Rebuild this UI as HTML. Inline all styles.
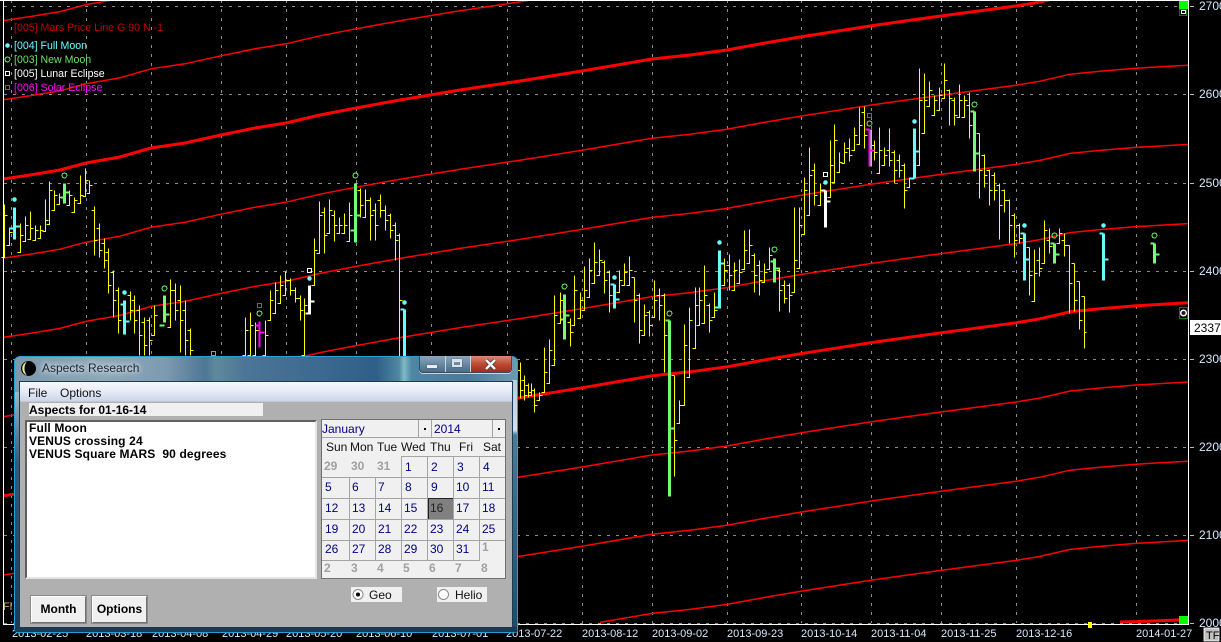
<!DOCTYPE html>
<html><head><meta charset="utf-8"><title>Aspects Research</title>
<style>
html,body{margin:0;padding:0;background:#000;width:1221px;height:642px;overflow:hidden;font-family:"Liberation Sans",sans-serif}
#p{position:relative;width:1221px;height:642px;overflow:hidden}
svg{position:absolute;left:0;top:0}
.a{position:absolute;white-space:pre}
.ax{font:12px "Liberation Sans",sans-serif;fill:#d4e8ff}
.dt{font:11px "Liberation Sans",sans-serif;fill:#d4e8ff}
.lg{font:10.6px "Liberation Sans",sans-serif}
.d{font:12px "Liberation Sans",sans-serif;fill:#000080}
.g{font:bold 12px "Liberation Sans",sans-serif;fill:#a0a0a0}
.w{font:12px "Liberation Sans",sans-serif;fill:#111}
.btn{position:absolute;background:#f0f0f0;border:1px solid;border-color:#fff #707070 #707070 #fff;box-shadow:0 0 0 1px #8a8a8a;font:bold 12px/25px "Liberation Sans",sans-serif;text-align:center;color:#000;top:596px;height:25px}
</style></head><body><div id="p">
<svg width="1221" height="642" viewBox="0 0 1221 642">
<defs>
<clipPath id="c"><rect x="4" y="1" width="1184" height="622"/></clipPath>
<path id="l" fill="none" stroke="#f00" d="M3 179L30 175L60 170L86 163L120 157L151 148L185 143L221 135L255 128L286 123L320 115L356 108L400 100L460 90L520 81L582 71L652 59L690 55L727 50L765 43L800 37L870 26L905 21L941 16L1016 6L1040 2L1070 -5L1100 -8L1136 -11L1188 -14"/>
</defs>
<g stroke="#8c8c8c" stroke-width="1" stroke-dasharray="3 6" shape-rendering="crispEdges">
<path d="M4 6.5H1188M4 94.5H1188M4 183.5H1188M4 271.5H1188M4 359.5H1188M4 447.5H1188M4 535.5H1188"/>
<path d="M11.500 0V623M86.500 0V623M151.500 0V623M221.500 0V623M286.500 0V623M356.500 0V623M431.500 0V623M507.500 0V623M582.500 0V623M652.500 0V623M727.500 0V623M801.500 0V623M871.500 0V623M941.500 0V623M1016.500 0V623M1136.500 0V623"/>
</g>
<g clip-path="url(#c)">
<use href="#l" y="-158.4" stroke-width="1.5"/><use href="#l" y="-79.2" stroke-width="1.5"/>
<use href="#l" y="0" stroke-width="3"/><use href="#l" y="79.2" stroke-width="1.5"/>
<use href="#l" y="158.4" stroke-width="1.5"/><use href="#l" y="237.6" stroke-width="1.5"/>
<use href="#l" y="316.8" stroke-width="3"/><use href="#l" y="396" stroke-width="1.5"/>
<path fill="none" stroke="#f00" stroke-width="1.5" d="M151 623L185 618.200L221 610.200L255 603.200L286 598.200L320 590.200L356 583.200L400 575.200L460 565.200L520 556.200L582 546.200L652 534.200L690 530.200L727 525.200L765 518.200L800 512.200L870 501.200L905 496.200L941 491.200L1016 481.200L1040 477.200L1070 470.200L1100 467.200L1136 464.200L1188 461.200"/>
<path fill="none" stroke="#f00" stroke-width="1.5" d="M600 622.400L652 613.400L690 609.400L727 604.400L765 597.400L800 591.400L870 580.400L905 575.400L941 570.400L1016 560.400L1040 556.400L1070 549.400L1100 546.400L1136 543.400L1188 540.400"/>
<path fill="none" stroke="#f00" stroke-width="3" d="M1120 622L1136 621.600L1188 619.600"/>
</g>
<g transform="translate(.5 .5)" shape-rendering="crispEdges" fill="none">
<path stroke="#ff0" d="M4 204V257h-3M4 215h3M9 227V245h-3M9 232h3M20 223V252h-3M20 235h3M25 216V241h-3M25 225h3M30 211V239h-3M30 228h3M35 225V240h-3M35 230h3M40 225V238h-3M40 230h3M45 199V231h-3M45 220h3M49 181V224h-3M49 190h3M54 190V210h-3M54 195h3M59 193V204h-3M59 197h3M69 190V205h-3M69 195h3M74 197V212h-3M74 200h3M80 175V203h-3M80 195h3M85 168V196h-3M85 180h3M89 180V193h-3M89 185h3M94 206V255M94 210h-3M94 240h3M99 223V257M99 228h-3M99 250h3M104 238V268M104 243h-3M104 260h3M108 248V293M108 252h-3M108 285h3M113 270V317M113 272h-3M113 300h3M118 287V333M118 290h-3M118 320h3M130 291V320M130 295h-3M130 310h3M134 295V333M134 300h-3M134 320h3M139 305V355M139 310h-3M139 335h3M144 317V355M144 322h-3M144 345h3M149 317V355M149 320h-3M149 340h3M154 305V335h-3M154 315h3M170 279V327h-3M170 290h3M175 283V320M175 290h-3M175 310h3M180 285V352M180 300h-3M180 320h3M185 300V355M185 310h-3M185 340h3M190 328V355M190 330h-3M190 350h3M245 317V355h-3M245 330h3M250 312V355h-3M250 325h3M255 322V355h-3M255 330h3M265 320V355h-3M265 335h3M270 290V320h-3M270 300h3M275 282V313h-3M275 290h3M280 275V303h-3M280 285h3M285 271V295h-3M285 280h3M290 278V295M290 280h-3M290 290h3M295 287V302M295 290h-3M295 298h3M300 295V320M300 298h-3M300 310h3M304 298V355h-3M304 305h3M314 238V285h-3M314 250h3M319 201V253h-3M319 215h3M324 207V253M324 212h-3M324 235h3M329 199V233h-3M329 210h3M334 210V241M334 215h-3M334 225h3M339 217V233h-3M339 225h3M344 213V233h-3M344 225h3M349 202V241h-3M349 215h3M360 188V217M360 190h-3M360 205h3M365 189V217h-3M365 200h3M370 197V240M370 200h-3M370 215h3M375 203V240M375 210h-3M375 225h3M380 194V217M380 200h-3M380 210h3M385 205V230M385 210h-3M385 220h3M390 213V238M390 215h-3M390 230h3M395 222V260M395 225h-3M395 240h3M399 233V356M399 235h-3M399 300h3M520 362V398M520 370h-3M520 390h3M524 375V400M524 380h-3M524 395h3M528 383V397M528 385h-3M528 392h3M531 383V395h-3M534 388V412M534 390h-3M534 405h3M539 392V400h-3M539 395h3M544 347V392h-3M544 372h3M549 339V383h-3M549 350h3M554 295V365h-3M554 315h3M560 292V323h-3M560 300h3M570 318V346M570 322h-3M570 332h3M574 275V325h-3M574 290h3M580 292V318h-3M580 300h3M584 266V310h-3M584 290h3M589 258V297h-3M589 270h3M594 242V283h-3M594 262h3M599 249V275h-3M599 260h3M604 260V293M604 262h-3M604 280h3M609 270V312M609 272h-3M609 295h3M619 270V292h-3M619 280h3M624 263V285h-3M624 272h3M629 256V285h-3M629 270h3M634 277V322M634 277h-3M634 300h3M639 293V343M639 295h-3M639 330h3M644 304V335h-3M644 315h3M649 310V336M649 312h-3M649 325h3M654 280V317h-3M654 300h3M659 288V320M659 295h-3M659 305h3M664 293V372M664 295h-3M664 335h3M674 375V476M674 375h-3M674 440h3M679 400V423h-3M679 405h3M684 324V405h-3M684 345h3M689 307V377h-3M689 320h3M695 287V348h-3M695 305h3M699 287V325h-3M699 300h3M704 265V323h-3M704 295h3M709 303V332M709 305h-3M709 320h3M714 292V317h-3M714 310h3M724 258V285h-3M724 270h3M729 254V290M729 265h-3M729 275h3M734 262V290h-3M734 270h3M739 259V283h-3M739 272h3M744 230V269h-3M744 250h3M749 229V263h-3M749 245h3M754 253V292M754 255h-3M754 275h3M759 260V295M759 265h-3M759 280h3M764 263V282h-3M764 272h3M769 247V269h-3M769 255h3M779 267V311M779 270h-3M779 290h3M784 280V303M784 285h-3M784 298h3M789 283V312M789 285h-3M789 295h3M794 207V292h-3M794 260h3M799 207V268h-3M799 225h3M804 177V234h-3M804 190h3M809 147V215h-3M809 175h3M814 163V205M814 170h-3M814 195h3M820 183V205h-3M820 190h3M830 140V197h-3M830 165h3M834 124V182h-3M834 140h3M839 152V172h-3M839 162h3M844 142V163h-3M844 152h3M849 138V161M849 148h-3M849 155h3M854 127V150h-3M854 135h3M859 107V144h-3M859 125h3M864 106V148M864 112h-3M864 135h3M874 140V160M874 145h-3M874 152h3M879 127V173h-3M879 150h3M884 147V165h-3M884 155h3M889 128V166M889 150h-3M889 160h3M894 150V183M894 152h-3M894 170h3M899 154V177M899 160h-3M899 170h3M904 163V208M904 165h-3M904 190h3M909 177V187h-3M919 68V165h-3M919 100h3M924 73V133h-3M924 100h3M929 81V106h-3M929 90h3M934 95V115h-3M934 100h3M939 87V110h-3M939 95h3M944 63V98h-3M944 80h3M949 89V125M949 90h-3M949 98h3M954 97V125M954 100h-3M954 115h3M959 84V117h-3M959 100h3M964 95V117h-3M964 100h3M969 92V138M969 105h-3M969 125h3M979 133V198M979 133h-3M979 170h3M984 154V187M984 155h-3M984 175h3M989 169V205M989 170h-3M989 190h3M994 172V200M994 175h-3M994 190h3M999 183V239M999 185h-3M999 205h3M1004 189V212M1004 190h-3M1004 200h3M1009 199V243M1009 200h-3M1009 225h3M1014 213V257M1014 215h-3M1014 240h3M1019 223V243M1019 225h-3M1019 238h3M1029 247V295M1029 247h-3M1029 275h3M1034 249V301h-3M1034 273h3M1039 247V276M1039 260h-3M1039 268h3M1044 220V263h-3M1044 230h3M1049 228V253M1049 240h-3M1049 246h3M1059 228V243h-3M1059 233h3M1064 233V256M1064 240h-3M1064 245h3M1069 245V313M1069 245h-3M1069 283h3M1074 263V311M1074 263h-3M1074 300h3M1079 281V329M1079 281h-3M1079 320h3M1084 296V348M1084 296h-3M1084 332h2"/>
<g stroke-width="3">
<path stroke="#66ffff" d="M14 207V239M124 300V334M404 309V356M614 284V308M719 250V308M914 128V178M1024 233V280M1103 233V280"/>
<path stroke="#70ff70" d="M64 183V203M164 295V322M355 183V242M564 294V339M669 320V496M774 258V282M974 111V171M1054 243V263M1154 243V263M870 129V166"/>
<path stroke="#fff" d="M309 285V314M825 190V227"/>
</g>
<path stroke="#ff00ff" stroke-width="2" d="M259 321V347M869 129V166"/>
<g stroke-width="2">
<path stroke="#66ffff" d="M14 228H9M14 226H20M124 304H120M124 321H129M404 309H400M614 284H610M614 299H619M719 307H714M719 263H724M914 178H909M914 151H919M1024 233H1020M1024 259H1029M1103 233H1099M1103 259H1108"/>
<path stroke="#70ff70" d="M64 197H60M64 192H69M164 325H159M164 314H169M355 230H350M355 215H360M564 319H560M564 315H569M669 320H665M669 428H674M774 261H770M774 268H779M974 111H970M974 153H979M1054 243H1050M1054 254H1059M1154 243H1150M1154 254H1159"/>
<path stroke="#ff00ff" d="M259 325H255M259 332H264M869 129H865M869 150H874"/>
<path stroke="#fff" d="M309 313H305M309 301H314M825 190H821M825 201H830"/>
</g>
<path stroke="#66ffff" stroke-width="4.500" stroke-linecap="round" shape-rendering="auto" d="M14 199h0M124 292h0M404 302h0M614 277h0M719 242h0M914 121h0M1024 225h0M1103 225h0M309 278h0M825 182h0M7 45h0"/>
<g stroke="#70ff70"><circle cx="64" cy="175" r="2.400"/><circle cx="164" cy="288" r="2.400"/><circle cx="355" cy="175" r="2.400"/><circle cx="564" cy="286" r="2.400"/><circle cx="669" cy="313" r="2.400"/><circle cx="774" cy="249" r="2.400"/><circle cx="974" cy="104" r="2.400"/><circle cx="1054" cy="235" r="2.400"/><circle cx="1154" cy="235" r="2.400"/><circle cx="259" cy="313" r="2.400"/><circle cx="869" cy="123" r="2.400"/><circle cx="7" cy="59" r="2.400"/></g>
<path stroke="#fff" d="M307 268h4v4h-4zM823 172h4v4h-4zM5 71h4v4h-4z"/>
<path stroke="#999" d="M211 351h4v4h-4z"/>
<path stroke="#ff00ff" d="M257 303h4v4h-4zM867 113h4v4h-4zM5 85h4v4h-4z"/>
</g>
<g fill="#fff" shape-rendering="crispEdges">
<rect x="0" y="0" width="1189" height="1"/><rect x="3" y="0" width="1" height="625"/><rect x="1188" y="0" width="1" height="625"/><rect x="3" y="624" width="1186" height="1"/>
</g>
<path stroke="#8c8c8c" stroke-dasharray="3 6" d="M4 623.500H1188" shape-rendering="crispEdges"/>
<g shape-rendering="crispEdges">
<rect x="1179" y="1" width="9" height="8" fill="#0f0"/>
<rect x="1179.500" y="9.500" width="7" height="6" fill="#000" stroke="#0a7a0a"/>
<rect x="1181.500" y="10.500" width="4" height="3" fill="none" stroke="#fff"/>
<rect x="1179" y="616" width="9" height="8" fill="#0f0"/>
<rect x="1088" y="622" width="4" height="6" fill="#ff0"/>
<rect x="1179.500" y="307.500" width="8" height="11" fill="#000" stroke="#0a7a0a"/>
<rect x="1190" y="320" width="31" height="15" fill="#fff"/>
<path stroke="#bbb" d="M1190 6.500h4M1190 94.500h4M1190 183.500h4M1190 271.500h4M1190 359.500h4M1190 447.500h4M1190 535.500h4M1190 623.500h4"/>
</g>
<circle cx="1183.500" cy="313" r="2.800" fill="#222" stroke="#fff" stroke-width="1.500"/>
<rect x="1204" y="628" width="15" height="13" fill="#c0c0c0" stroke="#fff" stroke-width=".8"/>
<text x="1206" y="639" font-family="Liberation Sans" font-size="11" fill="#000">TF</text>
<text class="ax" x="1199" y="10">2700</text><text class="ax" x="1199" y="98">2600</text><text class="ax" x="1199" y="187">2500</text><text class="ax" x="1199" y="275">2400</text><text class="ax" x="1199" y="363">2300</text><text class="ax" x="1199" y="451">2200</text><text class="ax" x="1199" y="539">2100</text><text class="ax" x="1199" y="627">2000</text>
<text x="1194" y="332" font-family="Liberation Sans" font-size="12" fill="#000">2337</text>
<text class="dt" x="12" y="637">2013-02-25</text><text class="dt" x="86" y="637">2013-03-18</text><text class="dt" x="152" y="637">2013-04-08</text><text class="dt" x="222" y="637">2013-04-29</text><text class="dt" x="286" y="637">2013-05-20</text><text class="dt" x="356" y="637">2013-06-10</text><text class="dt" x="432" y="637">2013-07-01</text><text class="dt" x="506" y="637">2013-07-22</text><text class="dt" x="582" y="637">2013-08-12</text><text class="dt" x="652" y="637">2013-09-02</text><text class="dt" x="727" y="637">2013-09-23</text><text class="dt" x="801" y="637">2013-10-14</text><text class="dt" x="871" y="637">2013-11-04</text><text class="dt" x="941" y="637">2013-11-25</text><text class="dt" x="1016" y="637">2013-12-16</text><text class="dt" x="1136" y="637">2014-01-27</text>
<text class="lg" x="14" y="31" fill="#c00000">[005] Mars Price Line G 90 N -1</text>
<text class="lg" x="14" y="49" fill="#66ffff">[004] Full Moon</text>
<text class="lg" x="14" y="63" fill="#70e070">[003] New Moon</text>
<text class="lg" x="14" y="77" fill="#fff">[005] Lunar Eclipse</text>
<text class="lg" x="14" y="91" fill="#ff00ff">[006] Solar Eclipse</text>
<text x="3" y="610" font-family="Liberation Sans" font-size="11" fill="#c8a860">Fl</text>
</svg>

<!-- dialog frame -->
<div class="a" style="left:14px;top:356px;width:504px;height:277px;border-radius:6px 6px 4px 4px;box-sizing:border-box;border:1px solid #2a9fd6;background:linear-gradient(90deg,#7f99ac 0,#8fa8b8 18%,#7d9ab0 30%,#4e7696 38%,#5f8a9c 40%,#4c7596 46%,#3c6a90 60%,#2f5f88 72%,#4f88a0 76.500%,#7dbcc4 77.500%,#4f86a4 79%,#4a7a9c 90%,#6f9ab0 100%)"></div>
<div class="a" style="left:15px;top:392px;width:5px;height:236px;background:linear-gradient(180deg,#9fb8c4,#34597a 30%,#1c3a56)"></div>
<div class="a" style="left:512px;top:380px;width:5px;height:250px;background:linear-gradient(180deg,#b8d0d8 0,#d0e2e8 20%,#4a7a9c 22%,#1f4a70)"></div>
<div class="a" style="left:15px;top:627px;width:502px;height:5px;background:#1c3a56"></div>
<svg width="1221" height="642" viewBox="0 0 1221 642">
<circle cx="28.500" cy="368.500" r="7.500" fill="#000"/>
<path d="M27 361.500A7.500 7.500 0 0 0 27 375.500A11 11 0 0 1 27 361.500Z" fill="#f2e98a"/>
</svg>
<div class="a" style="left:42px;top:361px;font-size:12px;line-height:15px;color:#1c2630;text-shadow:0 0 6px #dfe8ee,0 0 6px #dfe8ee">Aspects Research</div>
<!-- caption buttons -->
<div class="a" style="left:419px;top:356px;width:93px;height:17px;box-sizing:border-box;border:1px solid #3c4c5c;border-top:0;border-radius:0 0 4px 4px;overflow:hidden;box-shadow:0 1px 0 #c8d8e0">
 <div class="a" style="left:0;top:0;width:25px;height:16px;background:linear-gradient(180deg,#8aa6ba,#6a8aa2 50%,#4a6c88)"></div>
 <div class="a" style="left:25px;top:0;width:25px;height:16px;background:linear-gradient(180deg,#8aa6ba,#6a8aa2 50%,#4a6c88);border-left:1px solid #c8d8e0;box-sizing:border-box"></div>
 <div class="a" style="left:50px;top:0;width:42px;height:16px;background:linear-gradient(180deg,#d88a78,#c04a32 50%,#a02c1c);border-left:1px solid #c8d8e0;box-sizing:border-box"></div>
 <div class="a" style="left:7px;top:9px;width:10px;height:3px;background:#e8eef2;box-shadow:0 0 1px #333"></div>
 <div class="a" style="left:32px;top:3px;width:10px;height:8px;box-sizing:border-box;border:2px solid #dbe4ea;border-top-width:3px;box-shadow:0 0 1px #333"></div>
</div>
<svg width="1221" height="642" viewBox="0 0 1221 642"><path d="M486 360L495 369M495 360L486 369" stroke="#333" stroke-width="4"/><path d="M486 360L495 369M495 360L486 369" stroke="#f4f4f4" stroke-width="2.600"/></svg>
<!-- client -->
<div class="a" style="left:20px;top:382px;width:492px;height:245px;background:#b0b0b0;box-shadow:0 0 0 1px #1e3a52"></div>
<div class="a" style="left:20px;top:382px;width:492px;height:20px;background:linear-gradient(180deg,#f6f8fd,#eaeef8 40%,#cdd6ea);border-bottom:1px solid #c4c8d2;box-sizing:border-box"></div>
<div class="a" style="left:28px;top:386px;font-size:12px;line-height:14px;color:#111">File</div>
<div class="a" style="left:60px;top:386px;font-size:12px;line-height:14px;color:#111">Options</div>
<div class="a" style="left:29px;top:403px;width:234px;height:13px;background:#f0f0f0"></div>
<div class="a" style="left:29px;top:403px;font:bold 12px/14px 'Liberation Sans',sans-serif;color:#000">Aspects for 01-16-14</div>
<div class="a" style="left:25px;top:420px;width:292px;height:159px;box-sizing:border-box;background:#fff;border:2px solid;border-color:#606060 #e4e4e4 #e4e4e4 #606060"></div>
<div class="a" style="left:29px;top:422px;font:bold 12px/13px 'Liberation Sans',sans-serif;letter-spacing:.14px;color:#000">Full Moon
VENUS crossing 24
VENUS Square MARS  90 degrees</div>
<!-- calendar -->
<svg width="1221" height="642" viewBox="0 0 1221 642">
<rect x="321.500" y="419.500" width="184" height="159" fill="#f0f0f0" stroke="#707070"/>
<g shape-rendering="crispEdges" fill="none" stroke="#a4a4a4">
<path d="M322 437.500H505M418.500 420V437M431.500 420V437M492.500 420V437"/>
<path d="M401 456.500H505M322 477.500H505M322 498.500H505M322 519.500H505M322 540.500H505M322 560.500H479"/>
<path d="M401.500 456V561M427.500 456V561M453.500 456V561M479.500 456V561M349.500 477V561M375.500 477V561"/>
</g>
<rect x="428" y="498" width="25" height="21" fill="#808080" shape-rendering="crispEdges"/>
<path d="M428.500 519V498.500H453" fill="none" stroke="#222" shape-rendering="crispEdges"/>
<rect x="424" y="428" width="2" height="2" fill="#000"/><rect x="498" y="428" width="2" height="2" fill="#000"/>
<text class="d" x="322" y="433">January</text><text class="d" x="434" y="433">2014</text>
<text class="w" x="326" y="451">Sun</text><text class="w" x="350" y="451">Mon</text><text class="w" x="377" y="451">Tue</text><text class="w" x="401" y="451">Wed</text><text class="w" x="430" y="451">Thu</text><text class="w" x="459" y="451">Fri</text><text class="w" x="483" y="451">Sat</text>
<text class="g" x="324" y="470">29</text><text class="g" x="351" y="470">30</text><text class="g" x="377" y="470">31</text>
<text class="d" x="405" y="471">1</text><text class="d" x="431" y="471">2</text><text class="d" x="457" y="471">3</text><text class="d" x="483" y="471">4</text>
<text class="d" x="325" y="491">5</text><text class="d" x="352" y="491">6</text><text class="d" x="378" y="491">7</text><text class="d" x="405" y="491">8</text><text class="d" x="431" y="491">9</text><text class="d" x="456" y="491">10</text><text class="d" x="482" y="491">11</text>
<text class="d" x="325" y="512">12</text><text class="d" x="352" y="512">13</text><text class="d" x="378" y="512">14</text><text class="d" x="404" y="512">15</text><text class="d" x="430" y="512" style="fill:#222">16</text><text class="d" x="456" y="512">17</text><text class="d" x="482" y="512">18</text>
<text class="d" x="325" y="533">19</text><text class="d" x="352" y="533">20</text><text class="d" x="378" y="533">21</text><text class="d" x="404" y="533">22</text><text class="d" x="430" y="533">23</text><text class="d" x="456" y="533">24</text><text class="d" x="482" y="533">25</text>
<text class="d" x="325" y="553">26</text><text class="d" x="352" y="553">27</text><text class="d" x="378" y="553">28</text><text class="d" x="404" y="553">29</text><text class="d" x="430" y="553">30</text><text class="d" x="456" y="553">31</text><text class="g" x="482" y="551">1</text>
<text class="g" x="324" y="572">2</text><text class="g" x="351" y="572">3</text><text class="g" x="377" y="572">4</text><text class="g" x="403" y="572">5</text><text class="g" x="429" y="572">6</text><text class="g" x="455" y="572">7</text><text class="g" x="481" y="572">8</text>
<rect x="351" y="587" width="51" height="15" fill="#f0f0f0"/><rect x="437" y="587" width="50" height="15" fill="#f0f0f0"/>
<circle cx="358" cy="594.500" r="5" fill="#fff" stroke="#888"/><circle cx="358" cy="594.500" r="2" fill="#000"/>
<circle cx="443.500" cy="594.500" r="5" fill="#fff" stroke="#888"/>
<text class="w" x="369" y="599">Geo</text><text class="w" x="455" y="599">Helio</text>
</svg>
<div class="btn" style="left:31px;width:53px">Month</div>
<div class="btn" style="left:92px;width:53px">Options</div>
</div></body></html>
